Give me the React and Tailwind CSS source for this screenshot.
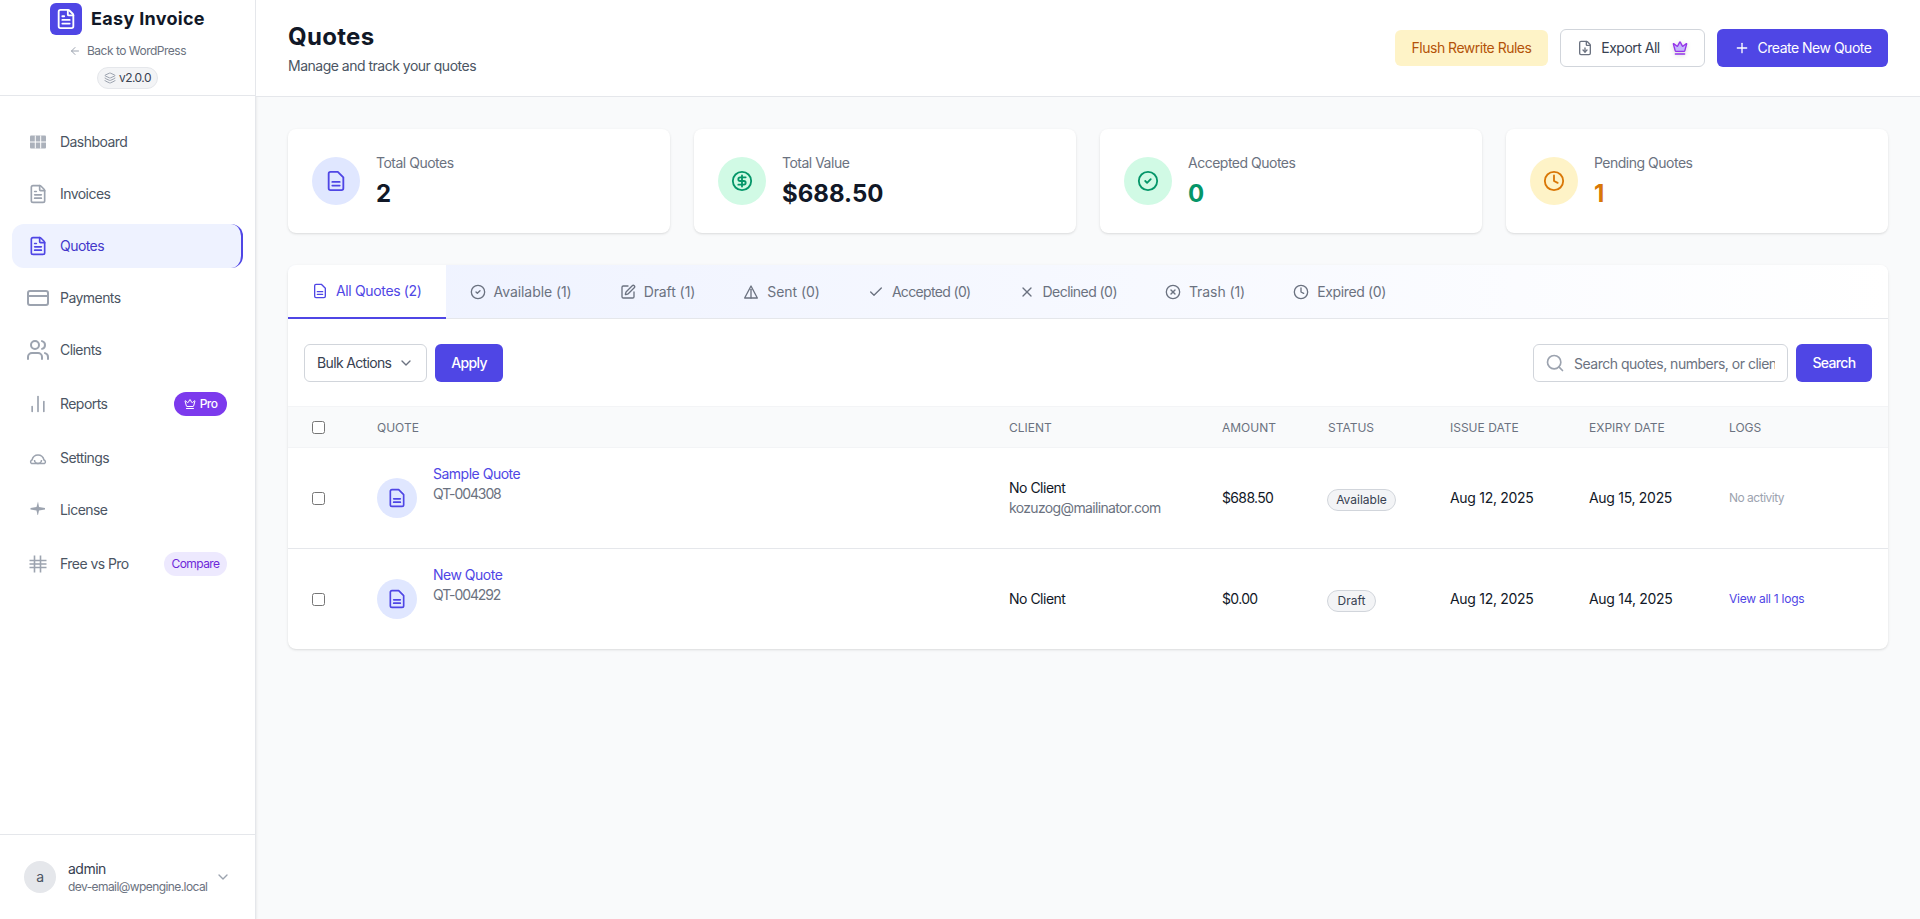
import React from "react";
import {
  FileText,
  ArrowLeft,
  Layers,
  Users,
  BarChart2,
  Crown,
  ChevronDown,
  Plus,
  CircleCheck,
  CircleDollarSign,
  Clock,
  SquarePen,
  Check,
  X,
  CircleX,
  Search,
  FileDown,
  CreditCard,
} from "lucide-react";

const DashIcon = ({ className }) => (
  <svg viewBox="0 0 20 20" className={className} fill="none">
    <rect x="2" y="3.500" width="16" height="13" rx="1" fill="currentColor" opacity="0.85" />
    <path d="M7.300 3.500v13M12.700 3.500v13M2 10h16" stroke="#fff" strokeWidth="1" />
  </svg>
);

const SettingsIcon = ({ className }) => (
  <svg viewBox="0 0 20 20" className={className} fill="none" stroke="currentColor" strokeWidth="1.500">
    <path d="M3.500 15.500c-1.500-1-1-3 .5-3.500 .8-3 2.800-5 6-5s5.200 2 6 5c1.500 .5 2 2.500 .5 3.500z" />
    <path d="M6.500 12a3.500 3.500 0 0 0 7 0" />
  </svg>
);

const LicenseIcon = ({ className }) => (
  <svg viewBox="0 0 20 20" className={className} fill="currentColor">
    <path d="M10 1.500l1 5.500 6 1v1.500l-6 1-1 4.500h-.5l-1-4.500-6-1v-1.500l6-1z" />
  </svg>
);

const HashIcon = ({ className }) => (
  <svg viewBox="0 0 20 20" className={className} fill="none" stroke="currentColor" strokeWidth="1.600">
    <path d="M1.500 6.500h17M1.500 10h17M1.500 13.500h17M6.500 1.500v17M12.500 1.500v17" />
  </svg>
);

// same page icon as lucide but with two lines, the way the cards draw it
const FileTwoLines = ({ className }) => (
  <svg viewBox="0 0 24 24" className={className} fill="none" stroke="currentColor" strokeWidth="2" strokeLinecap="round" strokeLinejoin="round">
    <path d="M14 2H6a2 2 0 0 0-2 2v16a2 2 0 0 0 2 2h12a2 2 0 0 0 2-2V8z" />
    <path d="M8 13h8M8 17h8" />
  </svg>
);

const SentIcon = ({ className }) => (
  <svg viewBox="0 0 24 24" className={className} fill="none" stroke="currentColor" strokeWidth="2" strokeLinecap="round" strokeLinejoin="round">
    <path d="M12 3 2.500 21h19z" />
    <path d="M12 8v13" />
  </svg>
);

const nav = [
  { label: "Dashboard", icon: DashIcon },
  { label: "Invoices", icon: FileText },
  { label: "Quotes", icon: FileText, active: true },
  { label: "Payments", icon: CreditCard, big: true },
  { label: "Clients", icon: Users, big: true },
  { label: "Reports", icon: BarChart2, pro: true },
  { label: "Settings", icon: SettingsIcon },
  { label: "License", icon: LicenseIcon },
  { label: "Free vs Pro", icon: HashIcon, compare: true },
];

const stats = [
  { label: "Total Quotes", value: "2", icon: FileTwoLines, circle: "bg-[#e0e7ff] text-[#4f46e5]", color: "text-[#111827]" },
  { label: "Total Value", value: "$688.50", icon: CircleDollarSign, circle: "bg-[#d1fae5] text-[#059669]", color: "text-[#111827]" },
  { label: "Accepted Quotes", value: "0", icon: CircleCheck, circle: "bg-[#d1fae5] text-[#059669]", color: "text-[#059669]" },
  { label: "Pending Quotes", value: "1", icon: Clock, circle: "bg-[#fef3c7] text-[#d97706]", color: "text-[#d97706]" },
];

const tabs = [
  { label: "All Quotes (2)", icon: FileTwoLines, active: true, track: "tracking-[-0.35px]" },
  { label: "Available (1)", icon: CircleCheck, track: "tracking-[-0.07px]" },
  { label: "Draft (1)", icon: SquarePen, track: "tracking-[-0.08px]" },
  { label: "Sent (0)", icon: SentIcon, track: "tracking-[-0.05px]" },
  { label: "Accepted (0)", icon: Check, track: "tracking-[-0.66px]" },
  { label: "Declined (0)", icon: X, track: "tracking-[-0.55px]" },
  { label: "Trash (1)", icon: CircleX, track: "tracking-[-0.08px]" },
  { label: "Expired (0)", icon: Clock, track: "tracking-[-0.35px]" },
];

const quotes = [
  { name: "Sample Quote", num: "QT-004308", email: "kozuzog@mailinator.com", amount: "$688.50", status: "Available", badge: "w-[69px]", issue: "Aug 12, 2025", expiry: "Aug 15, 2025" },
  { name: "New Quote", num: "QT-004292", amount: "$0.00", status: "Draft", badge: "w-[49px]", issue: "Aug 12, 2025", expiry: "Aug 14, 2025", logs: "View all 1 logs" },
];

function Sidebar() {
  return (
    <aside className="w-[256px] h-full shrink-0 bg-white border-r border-[#e5e7eb] shadow-sm flex flex-col">
      <div className="h-[96px] border-b border-[#e5e7eb] flex flex-col items-center pt-[3px]">
        <div className="flex items-center gap-[9px]">
          <div className="w-8 h-8 rounded-md bg-[#4f46e5] flex items-center justify-center text-white">
            <FileText className="w-[22px] h-[22px]" />
          </div>
          <span className="text-lg font-bold text-[#111827] tracking-[0.3px]">Easy Invoice</span>
        </div>
        <div className="mt-2 flex items-center gap-[6px] text-xs text-[#6b7280]">
          <ArrowLeft className="w-3 h-3 text-[#9ca3af]" />
          Back to WordPress
        </div>
        <div className="mt-2 h-[22px] px-[6px] flex items-center gap-[3px] rounded-full bg-[#f3f4f6] border border-[#e5e7eb] text-xs text-[#374151]">
          <Layers className="w-3 h-3 text-[#9ca3af]" />
          v2.0.0
        </div>
      </div>

      <nav className="flex-1 pt-6 px-3 flex flex-col gap-2">
        {nav.map((item) => {
          const Icon = item.icon;
          const size = item.big ? "w-6 h-6 -mx-0.5 -my-0.5" : "w-5 h-5";
          return (
            <div
              key={item.label}
              className={
                item.active
                  ? "flex items-center gap-3 px-4 py-3 rounded-xl text-sm tracking-[-0.55px] bg-[#eef2ff] text-[#4338ca] border-r-2 border-[#4f46e5]"
                  : "flex items-center gap-3 px-4 py-3 rounded-xl text-sm tracking-[-0.55px] text-[#4b5563]"
              }
            >
              <Icon className={size + (item.active ? " shrink-0 text-[#4f46e5]" : " shrink-0 text-[#9ca3af]")} />
              <span className="flex-1">{item.label}</span>
              {item.pro && (
                <span className="h-6 w-[53px] flex items-center justify-center gap-1 rounded-full bg-[#7c3aed] text-white text-xs font-medium">
                  <Crown className="w-3 h-3" />
                  Pro
                </span>
              )}
              {item.compare && (
                <span className="h-6 w-[63px] flex items-center justify-center rounded-full bg-[#ede9fe] text-[#6d28d9] text-xs">
                  Compare
                </span>
              )}
            </div>
          );
        })}
      </nav>

      <div className="h-[85px] border-t border-[#e5e7eb] px-6 flex items-center gap-3">
        <div className="w-8 h-8 rounded-full bg-[#e5e7eb] flex items-center justify-center text-sm text-[#4b5563]">a</div>
        <div className="flex-1 min-w-0">
          <div className="text-sm text-[#374151] leading-5">admin</div>
          <div className="text-xs text-[#6b7280] leading-4 whitespace-nowrap tracking-[-0.58px]">dev-email@wpengine.local</div>
        </div>
        <ChevronDown className="w-4 h-4 text-[#9ca3af] shrink-0" />
      </div>
    </aside>
  );
}

function Header() {
  return (
    <header className="h-[97px] shrink-0 bg-white border-b border-[#e5e7eb] px-8 flex items-center justify-between">
      <div>
        <h1 className="text-2xl font-bold text-[#111827] leading-8 tracking-[0.3px]">Quotes</h1>
        <p className="mt-[3px] text-sm text-[#4b5563]">Manage and track your quotes</p>
      </div>
      <div className="flex items-center gap-3">
        <button className="h-9 w-[153px] rounded-md bg-[#fef3c7] text-[#b45309] text-sm">Flush Rewrite Rules</button>
        <button className="h-[38px] w-[145px] justify-center rounded-md bg-white border border-[#d1d5db] text-[#374151] text-sm flex items-center gap-2">
          <FileDown className="w-4 h-4 text-[#6b7280]" />
          Export All
          <Crown className="w-4 h-4 ml-1 text-[#9333ea] fill-[#c4b5fd] drop-shadow-sm" />
        </button>
        <button className="h-[38px] w-[171px] justify-center rounded-md bg-[#4f46e5] text-white text-sm flex items-center gap-2">
          <Plus className="w-4 h-4" />
          Create New Quote
        </button>
      </div>
    </header>
  );
}

function StatCard({ stat }) {
  const Icon = stat.icon;
  return (
    <div className="bg-white rounded-lg shadow-sm p-6 flex items-center gap-4">
      <div className={"w-12 h-12 rounded-full flex items-center justify-center " + stat.circle}>
        <Icon className="w-[22px] h-[22px]" />
      </div>
      <div>
        <div className="text-sm text-[#6b7280] leading-5">{stat.label}</div>
        <div className={"text-2xl font-bold leading-[31px] mt-[5px] tracking-normal " + stat.color}>{stat.value}</div>
      </div>
    </div>
  );
}

function Tabs() {
  return (
    <div className="flex bg-linear-to-r from-[#eef2ff] to-white border-b border-[#e5e7eb] h-[54px]">
      {tabs.map((tab) => {
        const Icon = tab.icon;
        return (
          <div
            key={tab.label}
            className={
              tab.active
                ? "px-6 flex items-center gap-2 text-sm bg-white text-[#4f46e5] border-b-2 border-[#4f46e5] h-[54px] " + tab.track
                : "px-6 flex items-center gap-2 text-sm text-[#6b7280] h-[54px] " + tab.track
            }
          >
            <Icon className="w-4 h-4" />
            {tab.label}
          </div>
        );
      })}
    </div>
  );
}

function Toolbar() {
  return (
    <div className="px-4 pt-[25px] pb-6 flex items-center justify-between">
      <div className="flex items-center gap-2">
        <div className="h-[38px] w-[123px] px-3 rounded-md border border-[#d1d5db] bg-white flex items-center justify-between text-sm text-[#374151] whitespace-nowrap tracking-[-0.65px]">
          Bulk Actions
          <ChevronDown className="w-4 h-4 text-[#6b7280]" />
        </div>
        <button className="h-[38px] w-[68px] rounded-md bg-[#4f46e5] text-white text-sm font-medium tracking-[-0.65px]">Apply</button>
      </div>
      <div className="flex items-center gap-2">
        <div className="relative">
          <Search className="absolute left-3 top-[9px] w-5 h-5 text-[#9ca3af]" />
          <input
            className="h-[38px] w-[255px] pl-10 pr-3 rounded-md border border-[#d1d5db] bg-white text-sm placeholder:text-[#6b7280]"
            placeholder="Search quotes, numbers, or clients..."
          />
        </div>
        <button className="h-[38px] w-[76px] rounded-md bg-[#4f46e5] text-white text-sm font-medium tracking-[-0.65px]">Search</button>
      </div>
    </div>
  );
}

function QuotesTable() {
  const th = "px-6 pt-px text-left text-xs font-normal text-[#6b7280] uppercase tracking-normal";
  return (
    <table className="w-full table-fixed border-collapse">
      <thead>
        <tr className="h-[41px] bg-[#f9fafb] border-t border-b border-[#f3f4f6]">
          <th className="w-[65px] pl-6"><input type="checkbox" className="block" /></th>
          <th className={th + " w-[632px]"}>Quote</th>
          <th className={th + " w-[213px]"}>Client</th>
          <th className={th + " w-[106px]"}>Amount</th>
          <th className={th + " w-[122px]"}>Status</th>
          <th className={th + " w-[139px]"}>Issue Date</th>
          <th className={th + " w-[140px]"}>Expiry Date</th>
          <th className={th + " w-[183px]"}>Logs</th>
        </tr>
      </thead>
      <tbody>
        {quotes.map((q) => (
          <tr key={q.num} className="border-b border-[#e5e7eb] last:border-b-0">
            <td className="pl-6"><input type="checkbox" className="block" /></td>
            <td className="px-6 py-4">
              <div className="flex items-center gap-4">
                <div className="w-10 h-10 rounded-full bg-[#e0e7ff] text-[#4f46e5] flex items-center justify-center">
                  <FileTwoLines className="w-5 h-5" />
                </div>
                <div className="pb-7">
                  <div className="text-sm text-[#4f46e5] leading-5">{q.name}</div>
                  <div className="text-sm text-[#6b7280] leading-5 tracking-[-1.1px]">{q.num}</div>
                </div>
              </div>
            </td>
            <td className="px-6 text-sm text-[#111827]">
              <div className="leading-5">No Client</div>
              {q.email && <div className="text-[#6b7280] leading-5 whitespace-nowrap tracking-[-0.65px]">{q.email}</div>}
            </td>
            <td className="px-6 text-sm text-[#111827] tracking-[-0.65px]">{q.amount}</td>
            <td className="px-6">
              <span className={"inline-flex h-[22px] items-center justify-center -ml-px rounded-full border border-[#d1d5db] bg-[#f3f4f6] text-xs text-[#374151] tracking-normal " + q.badge}>
                {q.status}
              </span>
            </td>
            <td className="px-6 text-sm text-[#111827] tracking-[-0.3px]">{q.issue}</td>
            <td className="px-6 text-sm text-[#111827] tracking-[-0.3px]">{q.expiry}</td>
            <td className="px-6 text-xs">
              {q.logs ? <span className="text-[#4f46e5] tracking-[-0.25px]">{q.logs}</span> : <span className="text-[#9ca3af]">No activity</span>}
            </td>
          </tr>
        ))}
      </tbody>
    </table>
  );
}

export default function App() {
  return (
    <div className="h-screen flex bg-[#f9fafb] overflow-hidden font-['Inter',sans-serif] tracking-[-0.5px]">
      <Sidebar />
      <main className="flex-1 min-w-0 flex flex-col">
        <Header />
        <div className="p-8 flex flex-col gap-8">
          <div className="grid grid-cols-4 gap-6">
            {stats.map((s) => (
              <StatCard key={s.label} stat={s} />
            ))}
          </div>
          <div className="bg-white rounded-lg shadow-sm overflow-hidden">
            <Tabs />
            <Toolbar />
            <QuotesTable />
          </div>
        </div>
      </main>
    </div>
  );
}
